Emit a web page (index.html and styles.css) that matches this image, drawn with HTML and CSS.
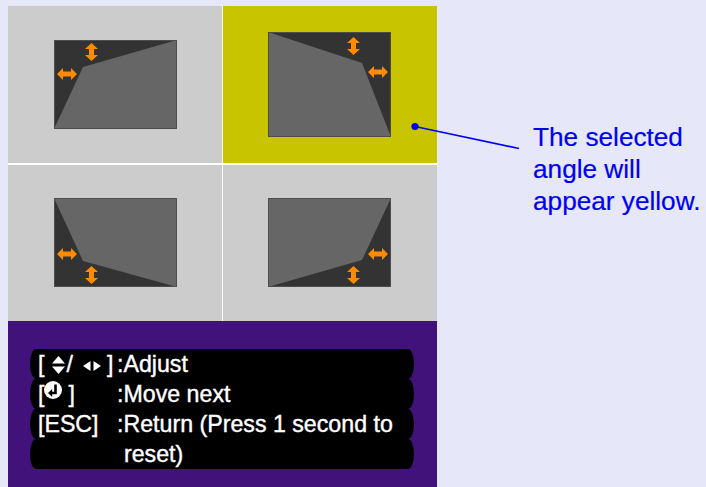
FILE: index.html
```html
<!DOCTYPE html>
<html>
<head>
<meta charset="utf-8">
<link rel="stylesheet" href="styles.css">
</head>
<body>
<div class="page">
  <div class="figure">
    <div class="grid">
      <div class="cell tl">
        <svg class="screen" width="123" height="89" viewBox="0 0 123 89">
          <rect width="123" height="89" fill="#333"/>
          <polygon points="29,27 123,0 123,89 0,89" fill="#666"/>
          <rect x="0.5" y="0.5" width="122" height="88" fill="none" stroke="#4d4d4d"/>
          <polygon transform="translate(31,3)" class="arr" points="6.5,0 13,6 9,6 9,12 13,12 6.5,18 0,12 4,12 4,6 0,6"/>
          <polygon transform="translate(3,28)" class="arr" points="0,6 6,0 6,3.5 14,3.5 14,0 20,6 14,12 14,8.5 6,8.5 6,12"/>
        </svg>
      </div>
      <div class="cell tr sel">
        <svg class="screen" width="123" height="105" viewBox="0 0 123 105">
          <rect width="123" height="105" fill="#333"/>
          <polygon points="0,0 94,31 123,105 0,105" fill="#666"/>
          <rect x="0.5" y="0.5" width="122" height="104" fill="none" stroke="#4d4d4d"/>
          <polygon transform="translate(79,5)" class="arr" points="6.5,0 13,6 9,6 9,12 13,12 6.5,18 0,12 4,12 4,6 0,6"/>
          <polygon transform="translate(100,34)" class="arr" points="0,6 6,0 6,3.5 14,3.5 14,0 20,6 14,12 14,8.5 6,8.5 6,12"/>
        </svg>
      </div>
      <div class="cell bl">
        <svg class="screen" width="123" height="89" viewBox="0 0 123 89">
          <rect width="123" height="89" fill="#333"/>
          <polygon points="0,0 123,0 123,89 29,63" fill="#666"/>
          <rect x="0.5" y="0.5" width="122" height="88" fill="none" stroke="#4d4d4d"/>
          <polygon transform="translate(3,50)" class="arr" points="0,6 6,0 6,3.5 14,3.5 14,0 20,6 14,12 14,8.5 6,8.5 6,12"/>
          <polygon transform="translate(31,68)" class="arr" points="6.5,0 13,6 9,6 9,12 13,12 6.5,18 0,12 4,12 4,6 0,6"/>
        </svg>
      </div>
      <div class="cell br">
        <svg class="screen" width="123" height="89" viewBox="0 0 123 89">
          <rect width="123" height="89" fill="#333"/>
          <polygon points="0,0 123,0 94,62 0,89" fill="#666"/>
          <rect x="0.5" y="0.5" width="122" height="88" fill="none" stroke="#4d4d4d"/>
          <polygon transform="translate(100,50)" class="arr" points="0,6 6,0 6,3.5 14,3.5 14,0 20,6 14,12 14,8.5 6,8.5 6,12"/>
          <polygon transform="translate(79,68)" class="arr" points="6.5,0 13,6 9,6 9,12 13,12 6.5,18 0,12 4,12 4,6 0,6"/>
        </svg>
      </div>
    </div>
    <div class="panel">
      <div class="menu">
        <div class="row">
          <span class="key">[<svg class="ud" width="13" height="18" viewBox="0 0 13 18"><polygon points="6.5,0 13,7.5 0,7.5" fill="#fff"/><polygon points="0,10.5 13,10.5 6.5,18" fill="#fff"/></svg>/<svg class="lr" width="18" height="10" viewBox="0 0 18 10"><polygon points="0,5 7.5,0 7.5,10" fill="#fff"/><polygon points="10.5,0 18,5 10.5,10" fill="#fff"/></svg>]</span><span>:Adjust</span>
        </div>
        <div class="row">
          <span class="key">[<svg class="enter" width="18" height="18" viewBox="0 0 18 18"><circle cx="9" cy="9" r="9" fill="#fff"/><path d="M11.5 3.5 V12 H7.5" fill="none" stroke="#000" stroke-width="2.6"/><polygon points="4,12 8.2,8 8.2,16" fill="#000"/></svg>]</span><span>:Move next</span>
        </div>
        <div class="row">
          <span class="key">[ESC]</span><span>:Return (Press 1 second to</span>
        </div>
        <div class="row">
          <span class="key"></span><span class="cont">reset)</span>
        </div>
      </div>
    </div>
  </div>
  <p class="caption">The selected<br>angle will<br>appear yellow.</p>
</div>
<svg class="callout" width="706" height="487" viewBox="0 0 706 487">
  <line x1="415" y1="126.5" x2="519" y2="148.5" stroke="#0000f0" stroke-width="1.6"/>
  <circle cx="415" cy="126.5" r="3.6" fill="#0000f0"/>
</svg>
</body>
</html>
```

FILE: styles.css
```css
html, body {
  margin: 0;
  padding: 0;
}

body {
  background: #e6e8fa;
  font-family: "Liberation Sans", Arial, Helvetica, sans-serif;
  width: 706px;
  height: 487px;
  overflow: hidden;
  position: relative;
}

.page {
  display: flex;
  align-items: flex-start;
  padding: 6px 0 0 8px;
}

.figure {
  width: 429px;
  display: flex;
  flex-direction: column;
  flex: none;
}

.grid {
  display: grid;
  grid-template-columns: 214px 214px;
  grid-template-rows: 157px 156px;
  column-gap: 1px;
  row-gap: 2px;
  background: #ffffff;
}

.cell {
  background: #cccccc;
}

.cell.sel {
  background: #c8c400;
}

.screen {
  display: block;
}

.arr {
  fill: #ff8c00;
}

.tl { padding: 34px 0 0 46px; }
.tr { padding: 26px 0 0 45px; }
.bl { padding: 33px 0 0 46px; }
.br { padding: 33px 0 0 45px; }

.panel {
  background: #41127a;
  height: 166px;
  box-sizing: border-box;
  padding: 28px 0 0 22px;
}

.menu {
  width: 384px;
  color: #ffffff;
  font-size: 23.2px;
  -webkit-text-stroke: 0.4px #ffffff;
}

.row {
  display: flex;
  height: 30px;
  line-height: 30px;
  background: #000000;
  border-radius: 6px / 15px;
  padding-left: 8px;
  white-space: nowrap;
}

.key {
  width: 79px;
  flex: none;
}

.ud {
  margin: 0 1px 0 8px;
  vertical-align: -2px;
}

.lr {
  margin: 0 6px 0 10px;
  vertical-align: 1.5px;
}

.enter {
  margin: 0 6px 0 0;
  vertical-align: 3px;
}

.cont {
  padding-left: 7px;
}

.caption {
  margin: 115px 0 0 96px;
  color: #0000f0;
  font-size: 26.2px;
  line-height: 32px;
  -webkit-text-stroke: 0.2px #0000f0;
}

.callout {
  position: absolute;
  left: 0;
  top: 0;
  pointer-events: none;
}
```
